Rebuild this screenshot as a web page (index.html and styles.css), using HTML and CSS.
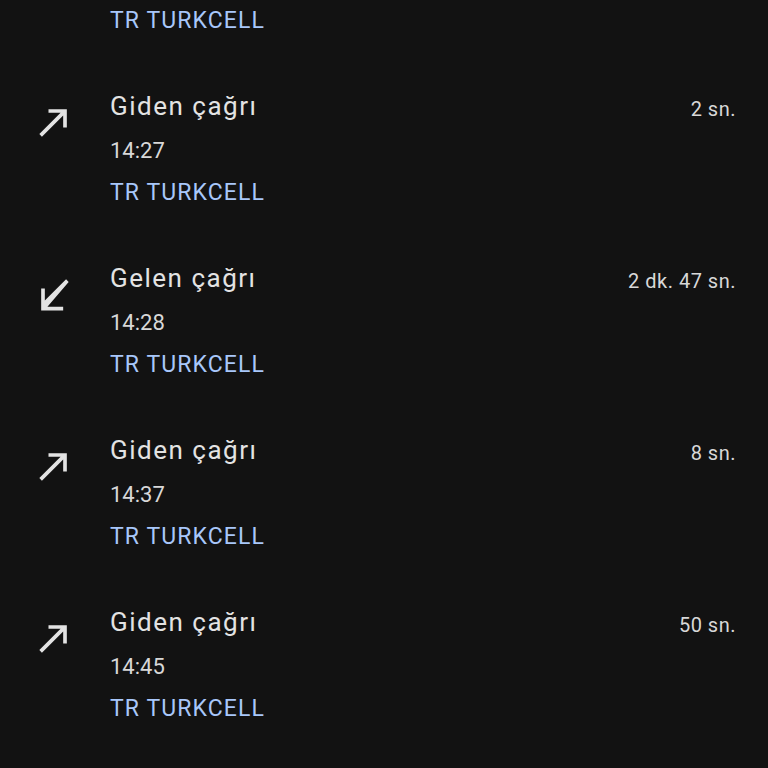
FILE: index.html
```html
<!DOCTYPE html>
<html lang="tr">
<head>
  <meta charset="UTF-8">
  <title>Arama geçmişi</title>
  <link rel="stylesheet" href="styles.css">
</head>
<body>
  <div class="call-list">
    <!-- önceki kaydın kalan kısmı (liste kaydırılmış) -->
    <div class="call-row partial">
      <div class="call-info">
        <div class="carrier">TR TURKCELL</div>
      </div>
    </div>

    <div class="call-row">
      <div class="call-icon">
        <svg viewBox="0 0 24 24"><path d="M9 5v2h6.59L4 18.59 5.41 20 17 8.41V15h2V5z"/></svg>
      </div>
      <div class="call-info">
        <div class="call-type">Giden çağrı</div>
        <div class="call-time">14:27</div>
        <div class="carrier">TR TURKCELL</div>
      </div>
      <div class="duration">2 sn.</div>
    </div>

    <div class="call-row">
      <div class="call-icon">
        <svg viewBox="0 0 24 24"><path d="M20 5.41L18.59 4 7 15.59V9H5v12h12v-2H8.41z"/></svg>
      </div>
      <div class="call-info">
        <div class="call-type">Gelen çağrı</div>
        <div class="call-time">14:28</div>
        <div class="carrier">TR TURKCELL</div>
      </div>
      <div class="duration">2 dk. 47 sn.</div>
    </div>

    <div class="call-row">
      <div class="call-icon">
        <svg viewBox="0 0 24 24"><path d="M9 5v2h6.59L4 18.59 5.41 20 17 8.41V15h2V5z"/></svg>
      </div>
      <div class="call-info">
        <div class="call-type">Giden çağrı</div>
        <div class="call-time">14:37</div>
        <div class="carrier">TR TURKCELL</div>
      </div>
      <div class="duration">8 sn.</div>
    </div>

    <div class="call-row">
      <div class="call-icon">
        <svg viewBox="0 0 24 24"><path d="M9 5v2h6.59L4 18.59 5.41 20 17 8.41V15h2V5z"/></svg>
      </div>
      <div class="call-info">
        <div class="call-type">Giden çağrı</div>
        <div class="call-time">14:45</div>
        <div class="carrier">TR TURKCELL</div>
      </div>
      <div class="duration">50 sn.</div>
    </div>
  </div>
</body>
</html>
```

FILE: styles.css
```css
/* Genel */
body { margin:0; padding:0; background:#121212; font-family:Roboto, "Noto Sans", sans-serif; color:#e3e3e3; height:100vh; overflow:hidden; }
.call-list { display:flex; flex-direction:column; }

/* Satırlar */
.call-row { display:flex; align-items:flex-start; padding:28px 32px 26px 32px; }
.call-row.partial { padding-top:6px; padding-bottom:26px; padding-left:110px; }
.call-icon { width:44px; height:44px; margin-top:10px; margin-right:34px; flex-shrink:0; }
.call-icon svg { width:44px; height:44px; fill:#e3e3e3; display:block; }

.call-info { flex:1; display:flex; flex-direction:column; }
.call-type { font-size:26px; line-height:32px; letter-spacing:1.5px; color:#e3e3e3; }
.call-time { font-size:22px; line-height:30px; margin-top:14px; color:#d8d8d8; }
.carrier { font-size:23px; line-height:30px; margin-top:12px; letter-spacing:1.1px; color:#a8c7fa; }
.partial .carrier { margin-top:0; }

.duration { font-size:20px; line-height:32px; padding-top:3px; letter-spacing:0.5px; color:#d8d8d8; }
```
